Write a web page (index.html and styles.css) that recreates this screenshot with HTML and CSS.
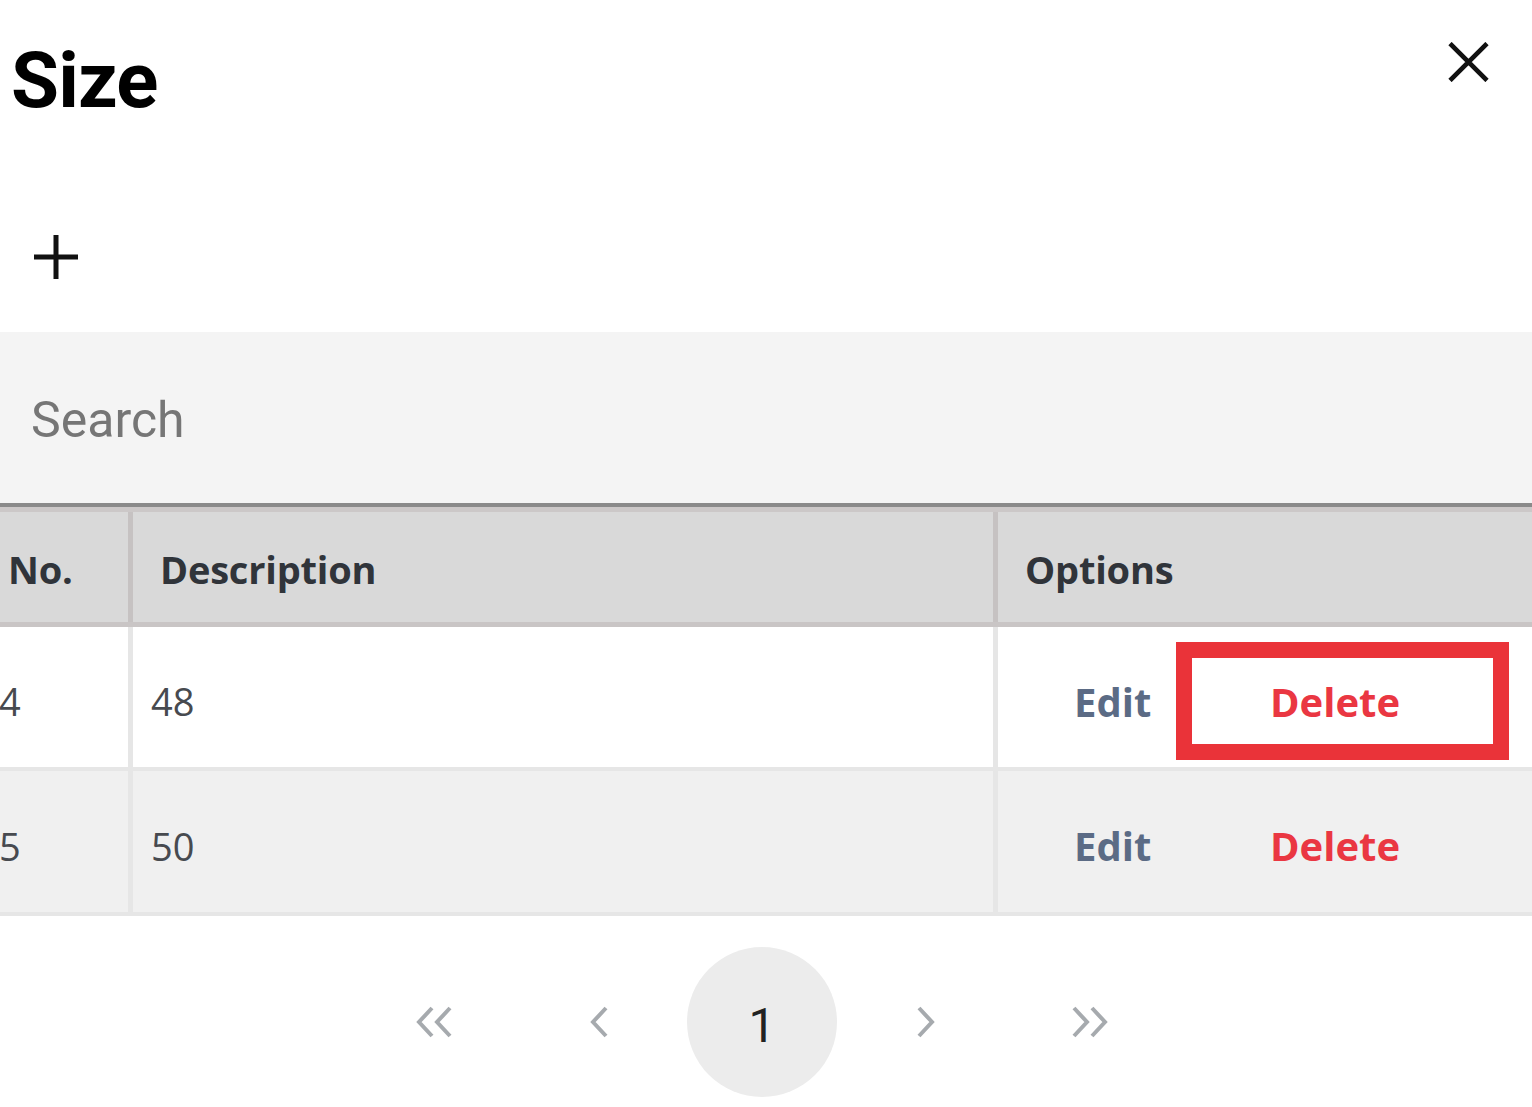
FILE: index.html
```html
<!DOCTYPE html>
<html lang="en">
<head>
<meta charset="utf-8">
<title>Size</title>
<link rel="stylesheet" href="styles.css">
</head>
<body>
<div class="modal">
  <header class="modal-head">
    <h1 class="title">Size</h1>
    <button class="icon-btn close" aria-label="Close">
      <svg width="41" height="40" viewBox="0 0 41 40"><path d="M2 1.5 L39 38.5 M39 1.5 L2 38.5" stroke="#111" stroke-width="4.6" fill="none"/></svg>
    </button>
  </header>

  <div class="toolbar">
    <button class="icon-btn add" aria-label="Add">
      <svg width="46" height="46" viewBox="0 0 46 46"><path d="M23 1 V45 M1 23 H45" stroke="#111" stroke-width="5" fill="none"/></svg>
    </button>
  </div>

  <div class="search">
    <input class="search-input" type="text" placeholder="Search">
  </div>

  <div class="grid">
    <div class="grid-row grid-head">
      <div class="cell head-cell">No.</div>
      <div class="cell head-cell">Description</div>
      <div class="cell head-cell last">Options</div>
    </div>
    <div class="grid-row body-row">
      <div class="cell body-cell">4</div>
      <div class="cell body-cell">48</div>
      <div class="cell body-cell actions last">
        <button class="link edit">Edit</button>
        <button class="link delete outlined">Delete</button>
      </div>
    </div>
    <div class="grid-row body-row alt">
      <div class="cell body-cell">5</div>
      <div class="cell body-cell">50</div>
      <div class="cell body-cell actions last">
        <button class="link edit">Edit</button>
        <button class="link delete">Delete</button>
      </div>
    </div>
  </div>

  <nav class="pager">
    <button class="pager-item" aria-label="First">
      <svg width="40" height="32" viewBox="0 0 40 32"><path d="M18 2 L5 16 L18 30 M36 2 L23 16 L36 30" stroke="#a6aaae" stroke-width="4" fill="none"/></svg>
    </button>
    <button class="pager-item" aria-label="Previous">
      <svg width="21" height="32" viewBox="0 0 21 32"><path d="M18 2 L5 16 L18 30" stroke="#a6aaae" stroke-width="4" fill="none"/></svg>
    </button>
    <button class="pager-item current">1</button>
    <button class="pager-item" aria-label="Next">
      <svg width="21" height="32" viewBox="0 0 21 32"><path d="M3 2 L16 16 L3 30" stroke="#a6aaae" stroke-width="4" fill="none"/></svg>
    </button>
    <button class="pager-item" aria-label="Last">
      <svg width="40" height="32" viewBox="0 0 40 32"><path d="M4 2 L17 16 L4 30 M22 2 L35 16 L22 30" stroke="#a6aaae" stroke-width="4" fill="none"/></svg>
    </button>
  </nav>
</div>
</body>
</html>
```

FILE: styles.css
```css
* { box-sizing: border-box; }

html, body {
  margin: 0;
  padding: 0;
  background: #ffffff;
}

body {
  font-family: "Open Sans", "Liberation Sans", sans-serif;
  overflow: hidden;
}

.icon-btn {
  border: 0;
  background: transparent;
  padding: 0;
  margin: 0;
  display: block;
  cursor: pointer;
}

.icon-btn svg { display: block; }

/* header */
.modal-head {
  display: flex;
  justify-content: space-between;
  align-items: flex-start;
  padding: 42px 43px 0 11px;
}

.title {
  margin: 0;
  font-family: Roboto, "Liberation Sans", sans-serif;
  font-weight: 700;
  font-size: 78px;
  line-height: 78px;
  color: #000;
  letter-spacing: -0.8px;
}

/* toolbar */
.toolbar {
  margin-top: 114px;
  padding-left: 33px;
  height: 46px;
}

/* search */
.search {
  margin-top: 52px;
  background: #f4f4f4;
  border-bottom: 4px solid #8a8a8a;
}

.search-input {
  display: block;
  width: 100%;
  height: 171px;
  border: 0;
  outline: none;
  background: transparent;
  padding: 4px 0 0 31px;
  font-family: Roboto, "Liberation Sans", sans-serif;
  font-size: 50px;
  color: #333;
}

.search-input::placeholder { color: #767676; }

/* grid table */
.grid {
  margin-left: -19px;
  width: calc(100% + 19px);
}

.grid-row {
  display: grid;
  grid-template-columns: 152px 865px 1fr;
}

.cell {
  display: flex;
  align-items: center;
}

.grid-head {
  background: #d9d9d9;
  border-top: 5px solid #ccc8c8;
  border-bottom: 5px solid #c9c5c5;
}

.head-cell {
  height: 110px;
  padding: 4px 0 0 27px;
  font-weight: 700;
  font-size: 38px;
  letter-spacing: -0.2px;
  color: #30343a;
  border-right: 5px solid #c6c2c2;
}

.head-cell.last { border-right: 0; }

.body-row {
  background: #ffffff;
  border-bottom: 4px solid #e6e6e6;
}

.body-row.alt { background: #f0f0f0; }

.body-cell {
  height: 140px;
  padding: 8px 0 0 18px;
  font-size: 38px;
  color: #474a4f;
  border-right: 5px solid #e6e6e6;
}

.body-row.alt .body-cell { height: 141px; }

.body-cell.last { border-right: 0; }

.actions { padding-left: 76px; }

.link {
  border: 0;
  background: transparent;
  padding: 0;
  margin: 0;
  font-family: "Open Sans", "Liberation Sans", sans-serif;
  font-weight: 700;
  font-size: 40px;
  text-align: left;
  cursor: pointer;
}

.edit {
  width: 102px;
  color: #5b6b85;
}

.delete {
  width: 333px;
  height: 118px;
  border: 16px solid transparent;
  padding-left: 78px;
  color: #ea3742;
}

.delete.outlined { border-color: #ea3339; }

/* pager */
.pager {
  margin-top: 31px;
  display: flex;
  justify-content: center;
  gap: 14px;
  padding-right: 8px;
}

.pager-item {
  width: 150px;
  height: 150px;
  border: 0;
  border-radius: 50%;
  background: transparent;
  padding: 0;
  display: flex;
  align-items: center;
  justify-content: center;
  cursor: pointer;
}

.pager-item svg { display: block; }

.pager-item.current {
  background: #ececec;
  font-family: Roboto, "Liberation Sans", sans-serif;
  font-size: 48px;
  color: #222;
  padding-top: 6px;
}
```
